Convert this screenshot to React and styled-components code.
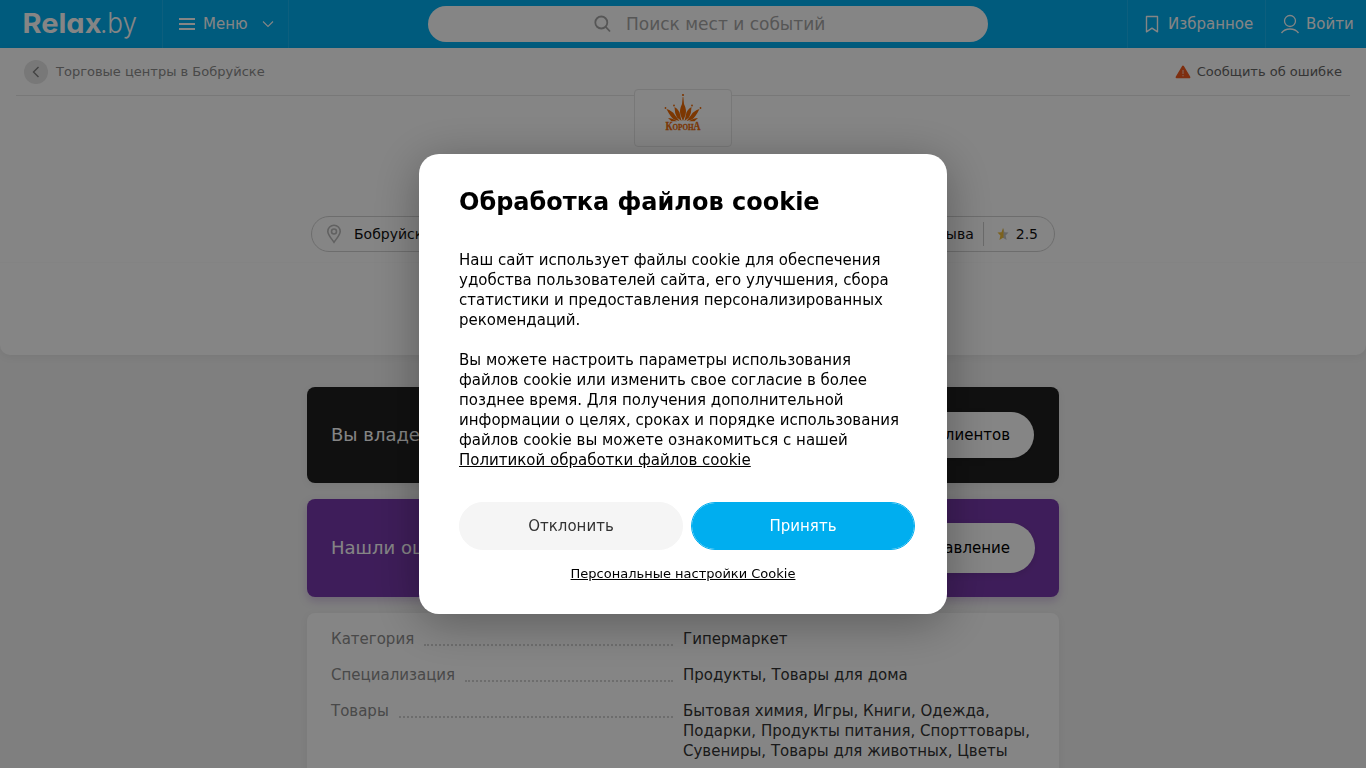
import styled, { createGlobalStyle } from 'styled-components';

const GlobalStyle = createGlobalStyle`
  * {
    box-sizing: border-box;
  }
  body {
    margin: 0;
    height: 768px;
    overflow: hidden;
    background: #f3f3f3;
    font-family: 'DejaVu Sans', sans-serif;
    font-size: 15px;
    line-height: 20px;
    color: #333;
  }
  button {
    font: inherit;
    border: 0;
    padding: 0;
  }
`;

const Header = styled.header`
  display: flex;
  height: 48px;
  background: #00aeef;
  color: #fff;
`;
const LogoLink = styled.a`
  width: 163px;
  padding-left: 22px;
  border-right: 1px solid #1ab6f1;
`;
const MenuButton = styled.div`
  display: flex;
  align-items: center;
  width: 126px;
  padding-left: 16px;
  border-right: 1px solid #1ab6f1;
`;
const MenuLabel = styled.span`
  width: 59px;
  margin-left: 8px;
`;
const SearchArea = styled.div`
  flex: 1;
  display: flex;
  align-items: center;
  justify-content: center;
`;
const Search = styled.div`
  display: flex;
  align-items: center;
  width: 560px;
  height: 36px;
  padding-left: 165px;
  gap: 13px;
  border-radius: 18px;
  background: #fff;
  color: #a6a6a6;
  font-size: 17px;
`;
const HeaderLink = styled.a`
  display: flex;
  align-items: center;
  gap: 6px;
  width: ${(props) => props.$width}px;
  padding-left: 14px;
  border-left: 1px solid #1ab6f1;
`;

const Place = styled.section`
  height: 307px;
  background: #fff;
  border-radius: 0 0 10px 10px;
  box-shadow: 0 2px 8px rgba(0, 0, 0, 0.06);
`;
const Crumbs = styled.div`
  display: flex;
  align-items: center;
  justify-content: space-between;
  height: 48px;
  margin: 0 16px;
  padding: 0 8px;
  border-bottom: 1px solid #e6e6e6;
  font-size: 13px;
`;
const Back = styled.a`
  display: flex;
  align-items: center;
  gap: 8px;
  color: #8c8c8c;
`;
const BackCircle = styled.span`
  display: flex;
  width: 24px;
  height: 24px;
  border-radius: 50%;
  background: #e6e6e6;
`;
const Report = styled.a`
  display: flex;
  align-items: center;
  gap: 6px;
  color: #666;
`;
const PlaceLogo = styled.div`
  position: relative;
  width: 98px;
  height: 58px;
  margin: -7px auto 0;
  border: 1px solid #e6e6e6;
  border-radius: 4px;
  background: #fff;
`;
const Facts = styled.div`
  display: flex;
  justify-content: space-between;
  width: 744px;
  height: 115px;
  margin: 0 auto;
  padding-top: 69px;
`;
const Divider = styled.div`
  height: 1px;
  background: #fbfbfb;
`;
const Pill = styled.div`
  display: flex;
  align-items: center;
  height: 36px;
  padding: 0 16px 0 14px;
  border: 1px solid #d2d2d2;
  border-radius: 18px;
  font-size: 14px;
  color: #111;
`;
const Address = styled.span`
  margin-left: 12px;
`;
const Rating = styled.span`
  display: flex;
  align-items: center;
  gap: 7px;
  height: 24px;
  margin-left: 9px;
  padding-left: 13px;
  border-left: 1px solid #ccc;
`;

const Content = styled.main`
  display: flex;
  flex-direction: column;
  gap: 16px;
  width: 752px;
  margin: 32px auto 0;
`;
const Banner = styled.div`
  display: flex;
  align-items: center;
  justify-content: space-between;
  height: ${(props) => (props.$purple ? 98 : 96)}px;
  padding: 0 ${(props) => (props.$purple ? 24 : 25)}px 0 24px;
  border-radius: 8px;
  background: ${(props) => (props.$purple ? '#7839ac' : '#202020')};
  box-shadow: ${(props) => (props.$purple ? '0 4px 8px rgba(120, 57, 172, 0.25)' : '0 2px 8px rgba(0, 0, 0, 0.06)')};
  color: #fff;
  font-size: 18px;
`;
const BannerButton = styled.button`
  height: ${(props) => props.$height}px;
  padding: 0 ${(props) => (props.$height === 50 ? 25 : 24)}px;
  border-radius: 25px;
  background: #fff;
  box-shadow: 0 2px 6px rgba(0, 0, 0, 0.1);
  color: #000;
  font-size: 15px;
`;
const Info = styled.div`
  display: flex;
  flex-direction: column;
  gap: 16px;
  height: 190px;
  padding: 16px 24px;
  border-radius: 8px;
  background: #fff;
  box-shadow: 0 2px 8px rgba(0, 0, 0, 0.06);
`;
const InfoRow = styled.div`
  display: grid;
  grid-template-columns: 342px 352px;
  column-gap: 10px;
`;
const InfoLabel = styled.div`
  display: flex;
  height: 20px;
  gap: 10px;
  color: #8c8c8c;
`;
const Dots = styled.span`
  flex: 1;
  height: 17px;
  border-bottom: 2px dotted #d2d2d2;
`;

const Overlay = styled.div`
  position: fixed;
  inset: 0;
  display: flex;
  align-items: center;
  justify-content: center;
  background: rgba(0, 0, 0, 0.48);
`;
const Dialog = styled.div`
  width: 528px;
  height: 460px;
  padding: 32px 32px 0 40px;
  border-radius: 20px;
  background: #fff;
  box-shadow: 0 8px 48px rgba(0, 0, 0, 0.32);
  color: #000;
`;
const DialogTitle = styled.h2`
  margin: 0 0 32px;
  font-size: 24px;
  line-height: 32px;
`;
const DialogText = styled.p`
  width: 448px;
  margin: 0 0 20px;
`;
const PolicyLink = styled.a`
  text-decoration: underline;
`;
const Buttons = styled.div`
  display: flex;
  gap: 8px;
  margin-top: 32px;
`;
const DialogButton = styled.button`
  width: 224px;
  height: 48px;
  border-radius: 24px;
  border: 1px solid ${(props) => (props.$primary ? '#00aeef' : '#f5f5f5')};
  background: ${(props) => (props.$primary ? '#00aeef' : '#f5f5f5')};
  background-clip: ${(props) => (props.$primary ? 'padding-box' : 'border-box')};
  color: ${(props) => (props.$primary ? '#fff' : '#333')};
`;
const SettingsLink = styled.a`
  display: block;
  width: 448px;
  margin-top: 14px;
  text-align: center;
  text-decoration: underline;
  font-size: 13px;
`;

const LogoSvg = styled.svg`
  display: block;
  fill: #fff;
  font-family: Inter, sans-serif;
  font-size: 27px;
  font-feature-settings: "cv11" 1;
`;

const Logo = () => (
  <LogoSvg width="120" height="48">
    <text x="0.500" y="32.500" fontWeight="700" textLength="79" lengthAdjust="spacingAndGlyphs">Relax</text>
    <text x="78" y="32.500" fontSize="28" fontWeight="300" textLength="37" lengthAdjust="spacingAndGlyphs">.by</text>
  </LogoSvg>
);

const KoronaLogo = () => (
  <svg width="96" height="56" fill="#ee6a05">
    <path d="M47.700 7h.6L49 14q3 6 1.500 11L48 31l-2.500-6Q44 20 47 14Z" />
    <path d="M39.500 17q5 3 5.500 7.500L46.500 31 42 27.500Q39.500 23 39.500 17ZM56.500 17q-5 3-5.500 7.500L49.500 31l4.500-3.500Q56.500 23 56.500 17Z" />
    <path d="M31.500 19q6 2 8 5.500L44.500 31 39 29.500Q35.500 27 31.500 19ZM64.500 19q-6 2-8 5.500L51.500 31l5.500-1.500Q60.500 27 64.500 19Z" />
    <path d="M33 28q4 0 9 3.300h-5.500ZM63 28q-4 0-9 3.300h5.500Z" />
    <circle cx="48" cy="5" r="1.100" />
    <circle cx="39" cy="15.500" r=".9" />
    <circle cx="57" cy="15.500" r=".9" />
    <circle cx="30.500" cy="18" r=".9" />
    <circle cx="65.500" cy="18" r=".9" />
    <text x="30.500" y="40" fontFamily="Liberation Serif, serif" fontWeight="700" fontSize="9" stroke="#ee6a05" strokeWidth=".3" textLength="35" lengthAdjust="spacingAndGlyphs">
      <tspan fontSize="12">К</tspan>ОРОН<tspan fontSize="12">А</tspan>
    </text>
  </svg>
);

const infoRows = [
  ['Категория', 'Гипермаркет'],
  ['Специализация', 'Продукты, Товары для дома'],
  ['Товары', 'Бытовая химия, Игры, Книги, Одежда, Подарки, Продукты питания, Спорттовары, Сувениры, Товары для животных, Цветы'],
];

const App = () => {
  return (
    <>
      <GlobalStyle />
      <Header>
        <LogoLink><Logo /></LogoLink>
        <MenuButton>
          <svg width="16" height="14" fill="none" stroke="#fff" strokeWidth="2"><path d="M0 2h16M0 7h16M0 12h16" /></svg>
          <MenuLabel>Меню</MenuLabel>
          <svg width="12" height="8" fill="none" stroke="#fff" strokeWidth="1.100"><path d="m1 1.500 5 5 5-5" /></svg>
        </MenuButton>
        <SearchArea>
          <Search>
            <svg width="20" height="20" fill="none" stroke="#a6a6a6" strokeWidth="1.800">
              <circle cx="8.300" cy="8.500" r="6" />
              <path d="m12.500 12.700 4.500 4.800" />
            </svg>
            Поиск мест и событий
          </Search>
        </SearchArea>
        <HeaderLink $width={138}>
          <svg width="20" height="20" fill="none" stroke="#fff" strokeWidth="1.400" strokeLinejoin="round"><path d="M4.500 2.500h11v15.300L10 14.200l-5.500 3.600Z" /></svg>
          Избранное
        </HeaderLink>
        <HeaderLink $width={101}>
          <svg width="20" height="20" fill="none" stroke="#fff" strokeWidth="1.300">
            <circle cx="10" cy="7" r="5.500" />
            <path d="M1.500 19c2-2.800 5-4 8.500-4s6.500 1.200 8.500 4" />
          </svg>
          Войти
        </HeaderLink>
      </Header>
      <Place>
        <Crumbs>
          <Back>
            <BackCircle>
              <svg width="24" height="24" fill="none" stroke="#808080" strokeWidth="1.400"><path d="m14.500 7-5 5 5 5" /></svg>
            </BackCircle>
            Торговые центры в Бобруйске
          </Back>
          <Report>
            <svg width="16" height="14">
              <path d="M8 1.500 14.400 12.300H1.600Z" fill="#f25a1f" stroke="#f25a1f" strokeWidth="2" strokeLinejoin="round" />
              <path d="M8 5v4M8 10v1.300" stroke="#fff" strokeOpacity=".7" />
            </svg>
            Сообщить об ошибке
          </Report>
        </Crumbs>
        <PlaceLogo><KoronaLogo /></PlaceLogo>
        <Facts>
          <Pill>
            <svg width="16" height="20" fill="none" stroke="#bbb" strokeWidth="1.600">
              <path d="M8 18.300C5 14 1.800 10.500 1.800 7.400a6.200 6.200 0 0 1 12.400 0C14.200 10.500 11 14 8 18.300Z" />
              <circle cx="8" cy="7.500" r="2.500" />
            </svg>
            <Address>Бобруйск</Address>
          </Pill>
          <Pill>
            2 отзыва
            <Rating>
              <svg width="12" height="12">
                <path d="M6 0 7.500 4.200l4 .3-2.900 3 1 4.500L6 9.700Z" fill="#c4c4c4" />
                <path d="M6.500 1.400 6 0 4.500 4.200l-4 .3 2.900 3-1 4.500L6 9.700l.5.300Z" fill="#edbd3c" />
              </svg>
              2.5
            </Rating>
          </Pill>
        </Facts>
        <Divider />
      </Place>
      <Content>
        <Banner>
          Вы владелец?
          <BannerButton $height={46}>Привлечь клиентов</BannerButton>
        </Banner>
        <Banner $purple>
          Нашли ошибку?
          <BannerButton $height={50}>Предложить исправление</BannerButton>
        </Banner>
        <Info>
          {infoRows.map(([label, value]) => (
            <InfoRow key={label}>
              <InfoLabel>{label}<Dots /></InfoLabel>
              <div>{value}</div>
            </InfoRow>
          ))}
        </Info>
      </Content>
      <Overlay>
        <Dialog>
          <DialogTitle>Обработка файлов cookie</DialogTitle>
          <DialogText>
            Наш сайт использует файлы cookie для обеспечения удобства пользователей сайта, его улучшения, сбора статистики и предоставления персонализированных рекомендаций.
          </DialogText>
          <DialogText>
            Вы можете настроить параметры использования файлов cookie или изменить свое согласие в более позднее время. Для получения дополнительной информации о целях, сроках и порядке использования файлов cookie вы можете ознакомиться с нашей <PolicyLink>Политикой обработки файлов cookie</PolicyLink>
          </DialogText>
          <Buttons>
            <DialogButton>Отклонить</DialogButton>
            <DialogButton $primary>Принять</DialogButton>
          </Buttons>
          <SettingsLink>Персональные настройки Cookie</SettingsLink>
        </Dialog>
      </Overlay>
    </>
  );
};
export default App;
